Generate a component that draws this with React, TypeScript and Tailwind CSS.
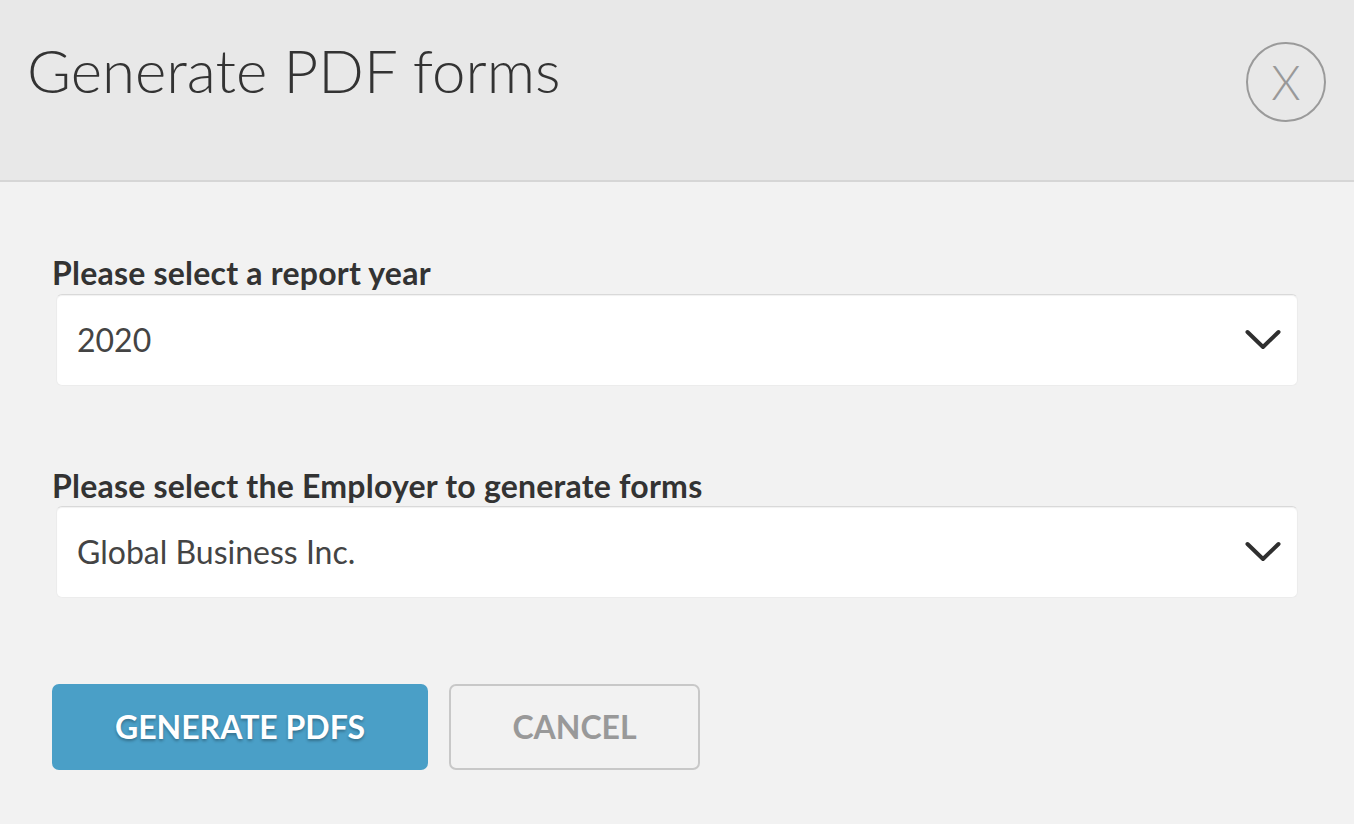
import React from "react";

function Chevron() {
  return (
    <svg width="36" height="22" viewBox="0 0 36 22" fill="none">
      <path d="M2.5 3 L18 18 L33.5 3" stroke="#2f2f2f" strokeWidth="4" strokeLinecap="round" strokeLinejoin="round" />
    </svg>
  );
}

function SelectBox({ value }: { value: string }) {
  return (
    <div className="ml-[4px] mr-[56px] h-[92px] bg-white rounded-[6px] border border-[#ececec] border-t-[#d9d9d9] shadow-[inset_0_1px_1px_rgba(0,0,0,0.06)] flex items-center justify-between pl-[20px] pr-[16px]">
      <span className="text-[32px] text-[#444] leading-none">{value}</span>
      <Chevron />
    </div>
  );
}

export default function App() {
  return (
    <div className="w-[1354px] h-[824px] bg-[#f2f2f2] font-['Lato',sans-serif] overflow-hidden">
      <div className="h-[182px] bg-[#e8e8e8] border-b-2 border-[#d6d6d6] flex items-start justify-between pl-[27px] pr-[28px]">
        <h1 className="mt-[35px] text-[60px] font-light text-[#333] leading-[70px]">Generate PDF forms</h1>
        <button className="mt-[42px] w-[80px] h-[80px] rounded-full border-2 border-[#9a9a9a] flex items-center justify-center text-[#999]">
          <span className="text-[47px] font-light leading-none">X</span>
        </button>
      </div>
      <div className="pl-[52px] pt-[72px]">
        <div className="text-[32px] font-bold text-[#333] leading-[38px] tracking-[0.22px]">Please select a report year</div>
        <div className="mt-[2px]">
          <SelectBox value="2020" />
        </div>
        <div className="mt-[81px] text-[32px] font-bold text-[#333] leading-[38px] tracking-[0.22px]">Please select the Employer to generate forms</div>
        <div className="mt-[1px]">
          <SelectBox value="Global Business Inc." />
        </div>
        <div className="mt-[86px] flex gap-[21px]">
          <button className="w-[376px] h-[86px] rounded-[7px] bg-[#4a9fc7] text-white text-[32px] font-bold uppercase [text-shadow:0_2px_3px_rgba(0,0,0,0.3)]">
            Generate PDFs
          </button>
          <button className="w-[251px] h-[86px] rounded-[7px] border-2 border-[#c8c8c8] text-[#999] text-[32px] font-bold uppercase">
            Cancel
          </button>
        </div>
      </div>
    </div>
  );
}
